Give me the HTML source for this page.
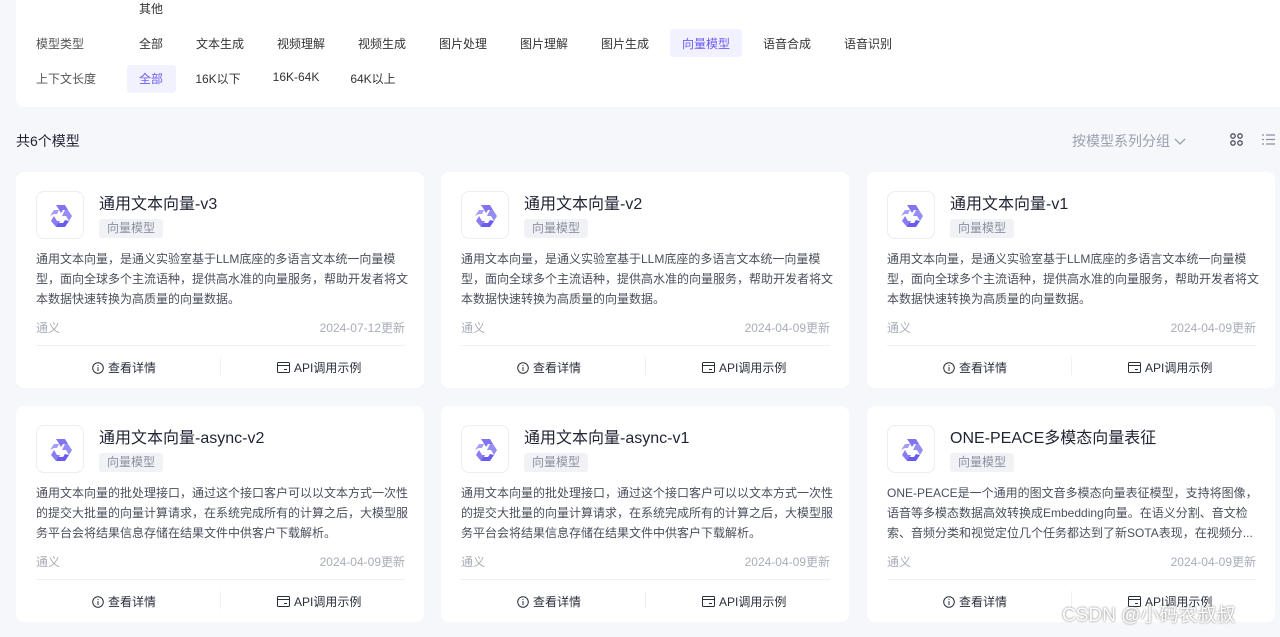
<!DOCTYPE html>
<html><head><meta charset="utf-8"><style>
*{margin:0;padding:0;box-sizing:border-box}
body{width:1280px;height:637px;overflow:hidden;background:#f6f7fb;font-family:"Liberation Sans","Noto Sans CJK SC",sans-serif;color:#1f2333;position:relative}
.panel{position:absolute;left:16px;top:-10px;width:1280px;height:117px;background:#fff;border-radius:8px}
.t{position:absolute;font-size:12px;white-space:nowrap;transform:translateX(-50%);color:#333}
.lbl{position:absolute;font-size:12px;color:#555;left:36px}
.chip{position:absolute;height:28px;border-radius:4px;background:#f2f1ff;color:#6a5cf0;font-size:12px;text-align:center;line-height:28px}
.count{position:absolute;left:16px;top:131px;font-size:14px;color:#1f2333}
.grp{position:absolute;left:1072px;top:131px;font-size:14px;color:#9aa0ae}
.card{position:absolute;width:408px;height:216px;background:#fff;border-radius:8px}
.ic{position:absolute;left:20px;top:19px;width:48px;height:48px;border:1px solid #eceef3;border-radius:8px}
.ic svg{position:absolute;left:11px;top:11px}
.ti{position:absolute;left:83px;top:18px;font-size:16px;color:#1f2333}
.tag{position:absolute;left:83px;top:47px;height:19px;padding:0 8px;background:#f1f2f6;border-radius:3px;font-size:12px;color:#8a90a0;line-height:19px}
.ds{position:absolute;left:20px;top:77px;width:372px;font-size:12px;line-height:20px;color:#4a4f5c;height:60px;overflow:hidden}
.fl{position:absolute;left:20px;top:147px;font-size:12px;color:#a8adb8}
.fr{position:absolute;right:19px;top:147px;font-size:12px;color:#a8adb8}
.hr{position:absolute;left:20px;right:19px;top:173px;border-top:1px solid #eef0f4}
.b1,.b2{position:absolute;top:187px;font-size:12px;color:#2a2f3c;display:flex;align-items:center;gap:4px}
.b1{left:76px}.b2{left:261px}
.sep{position:absolute;left:204px;top:185px;height:18px;border-left:1px solid #eef0f4}
</style></head><body>
<div class="panel"></div>
<div class="t" style="left:151px;top:0">其他</div>
<div class="lbl" style="top:35px">模型类型</div>
<div class="chip" style="left:670px;top:29px;width:72px"></div>
<div class="t" style="left:151px;top:35px">全部</div>
<div class="t" style="left:220px;top:35px">文本生成</div>
<div class="t" style="left:301px;top:35px">视频理解</div>
<div class="t" style="left:382px;top:35px">视频生成</div>
<div class="t" style="left:463px;top:35px">图片处理</div>
<div class="t" style="left:544px;top:35px">图片理解</div>
<div class="t" style="left:625px;top:35px">图片生成</div>
<div class="t" style="left:706px;top:35px;color:#6a5cf0">向量模型</div>
<div class="t" style="left:787px;top:35px">语音合成</div>
<div class="t" style="left:868px;top:35px">语音识别</div>
<div class="lbl" style="top:70px">上下文长度</div>
<div class="chip" style="left:127px;top:65px;width:49px"></div>
<div class="t" style="left:151px;top:70px;color:#6a5cf0">全部</div>
<div class="t" style="left:218px;top:70px">16K以下</div>
<div class="t" style="left:296px;top:70px">16K-64K</div>
<div class="t" style="left:373px;top:70px">64K以上</div>
<div class="count">共6个模型</div>
<div class="grp">按模型系列分组 <svg width="12" height="8" viewBox="0 0 12 8"><path d="M1 1l5 5 5-5" stroke="#9aa0ae" fill="none" stroke-width="1.3"/></svg></div>
<svg style="position:absolute;left:1230px;top:133px" width="13" height="13" viewBox="0 0 13 13" fill="none" stroke="#4a4f5c" stroke-width="1.3"><circle cx="3" cy="3" r="2.2"/><circle cx="10" cy="3" r="2.2"/><circle cx="3" cy="10" r="2.2"/><circle cx="10" cy="10" r="2.2"/></svg>
<svg style="position:absolute;left:1262px;top:134px" width="13" height="11" viewBox="0 0 13 11" stroke="#8a90a0" stroke-width="1.2"><path d="M0 1h2M4 1h9M0 5.5h2M4 5.5h9M0 10h2M4 10h9"/></svg>

<div id="cards"></div>
<script>
var icon='<svg width="26" height="26" viewBox="0 0 26 26"><g fill="#6a5cf0"><path d="M8 2h9l3 5h-5l-2 3-3-5z" opacity=".85"/><path d="M20 7l4 6-3 5-3-5h-4l3-6z" opacity=".7"/><path d="M21 18l-4 6H8l2-4h5l2-3z"/><path d="M8 24L3 18l3-5 3 5h3l-2 4z" opacity=".8"/><path d="M2 13l4-6h5l-2 4H6z" opacity=".6"/></g></svg>';
var d1='通用文本向量，是通义实验室基于LLM底座的多语言文本统一向量模型，面向全球多个主流语种，提供高水准的向量服务，帮助开发者将文本数据快速转换为高质量的向量数据。';
var d2='通用文本向量的批处理接口，通过这个接口客户可以以文本方式一次性的提交大批量的向量计算请求，在系统完成所有的计算之后，大模型服务平台会将结果信息存储在结果文件中供客户下载解析。';
var d3='ONE-PEACE是一个通用的图文音多模态向量表征模型，支持将图像，语音等多模态数据高效转换成Embedding向量。在语义分割、音文检索、音频分类和视觉定位几个任务都达到了新SOTA表现，在视频分...';
var cs=[['通用文本向量-v3',d1,'2024-07-12更新'],['通用文本向量-v2',d1,'2024-04-09更新'],['通用文本向量-v1',d1,'2024-04-09更新'],['通用文本向量-async-v2',d2,'2024-04-09更新'],['通用文本向量-async-v1',d2,'2024-04-09更新'],['ONE-PEACE多模态向量表征',d3,'2024-04-09更新']];
var xs=[16,441,867],ys=[172,406],h='';
var info='<svg width="12" height="12" viewBox="0 0 12 12"><circle cx="6" cy="6" r="5.3" fill="none" stroke="#2a2f3c"/><path d="M6 5v4M6 3v1" stroke="#2a2f3c"/></svg>';
var api='<svg width="13" height="11" viewBox="0 0 13 11" fill="none" stroke="#2a2f3c"><rect x=".5" y=".5" width="12" height="10" rx="1"/><path d="M.5 3.5h12M7 7.5h3"/></svg>';
cs.forEach(function(c,i){h+='<div class="card" style="left:'+xs[i%3]+'px;top:'+ys[Math.floor(i/3)]+'px"><div class="ic">'+icon+'</div><div class="ti">'+c[0]+'</div><div class="tag">向量模型</div><div class="ds">'+c[1]+'</div><div class="fl">通义</div><div class="fr">'+c[2]+'</div><div class="hr"></div><div class="b1">'+info+'查看详情</div><div class="sep"></div><div class="b2">'+api+'API调用示例</div></div>';});
document.getElementById('cards').innerHTML=h;
</script>
<div style="position:absolute;left:1062px;top:600px;font-size:19px;color:#fff;text-shadow:0 0 2px #666">CSDN @小码农叔叔</div>
</body></html>
